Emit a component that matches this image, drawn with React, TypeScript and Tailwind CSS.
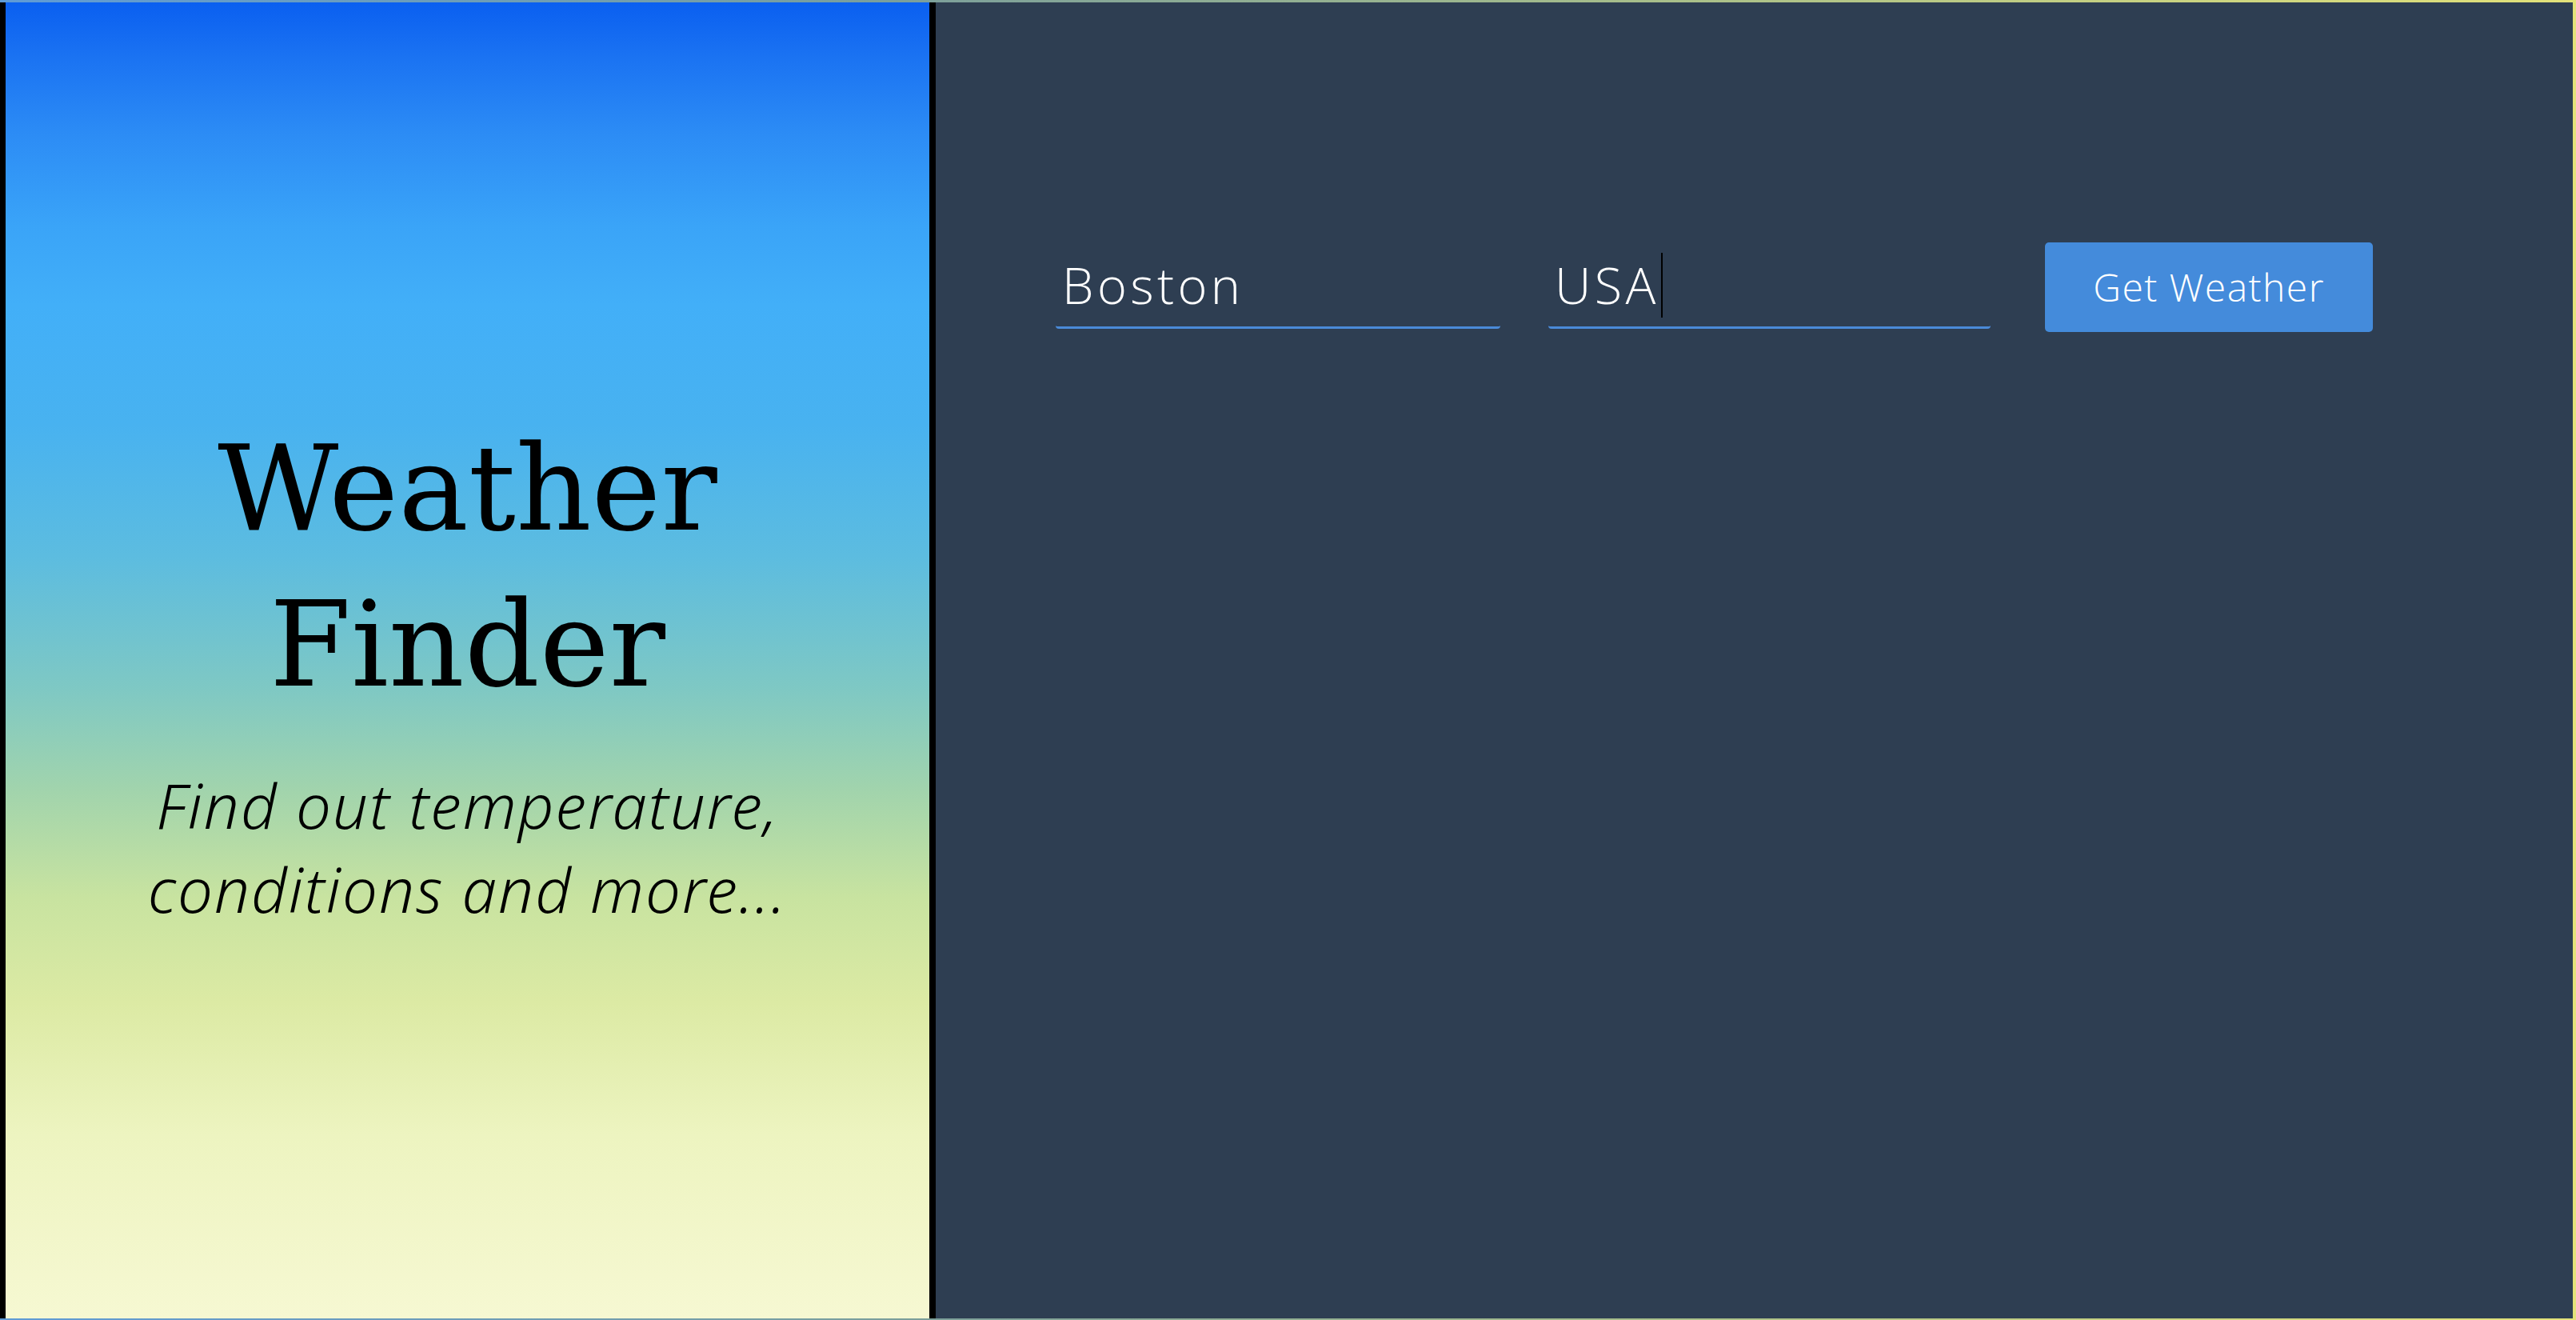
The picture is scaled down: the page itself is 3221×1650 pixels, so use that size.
import React from 'react';

function Field({ value, caret }: { value: string; caret?: boolean }) {
  return (
    <div className="flex h-[103px] items-center rounded-[4px] border-b-[3px] border-[#4a8ad8] pb-[4px] pl-[8px]">
      <span className="font-['Open_Sans',sans-serif] text-[63px] font-light leading-none tracking-[0.07em] text-white">
        {value}
      </span>
      {caret && <span className="ml-[2px] mt-[2px] h-[81px] w-[2px] bg-black" />}
    </div>
  );
}

export default function App() {
  return (
    <div className="h-[1650px] w-full overflow-hidden bg-[linear-gradient(to_right,#5f9bd6,#7b9f9b_35%,#a9bf8a_65%,#e3e27a)] pt-[3px] pr-[4px] pb-[2px]">
      <div className="flex h-full">
        <section className="flex h-full w-[1170px] shrink-0 flex-col items-center border-l-[7px] border-r-[8px] border-black bg-[linear-gradient(to_bottom,#0a5ff0_0%,#1a72f2_4%,#2c8cf5_10%,#3aa4f8_17%,#42aff8_23%,#48b2f0_32%,#5cbce0_42%,#7ec8c4_52%,#a2d4ac_60%,#c8e3a0_68%,#dceaa4_76%,#edf4c0_86%,#f6f8d2_100%)] pt-[511px] text-center">
          <h1 className="font-['DejaVu_Serif',serif] text-[147px] font-normal leading-[195px] text-black">
            Weather
            <br />
            Finder
          </h1>
          <p className="mt-[50px] font-['Noto_Sans',sans-serif] text-[78px] font-light italic leading-[105px] tracking-[0.025em] text-black">
            Find out temperature,
            <br />
            conditions and more...
          </p>
        </section>
        <main className="flex-1 bg-[#2e3e52] pl-[150px] pt-[300px]">
          <div className="flex items-center">
            <div className="w-[556px]">
              <Field value="Boston" />
            </div>
            <div className="ml-[60px] w-[553px]">
              <Field value="USA" caret />
            </div>
            <button className="ml-[68px] h-[112px] w-[410px] rounded-[5px] bg-[#448bdb] font-['Open_Sans',sans-serif] text-[48px] font-light tracking-[0.03em] text-white">
              Get Weather
            </button>
          </div>
        </main>
      </div>
    </div>
  );
}
